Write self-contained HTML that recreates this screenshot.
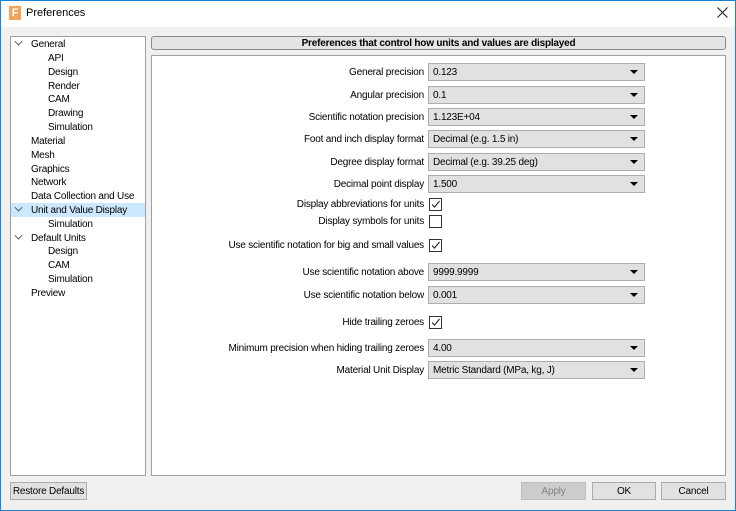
<!DOCTYPE html>
<html><head><style>
*{box-sizing:border-box;margin:0;padding:0}
body{width:736px;height:511px;overflow:hidden;background:#f0f0f0;font-family:"Liberation Sans",Arial,sans-serif;font-size:10px;letter-spacing:-0.2px;color:#000;position:relative}
.win{position:absolute;left:0;top:0;width:736px;height:511px;border:1px solid #1883d7}
.title{position:absolute;left:1px;top:1px;width:734px;height:26px;background:#fff}
.abs{position:absolute}
.tree{left:10px;top:36px;width:136px;height:440px;background:#fff;border:1px solid #a0a0a0}
.ti{position:absolute;height:13px;line-height:14px;white-space:nowrap}
.hdr{left:151px;top:36px;width:575px;height:14px;border:1px solid #8a8a8a;border-radius:3px;background:#e4e4e4;text-align:center;font-weight:bold;line-height:13px}
.pan{left:151px;top:55px;width:575px;height:421px;background:#fff;border:1px solid #a0a0a0}
.lbl{position:absolute;right:312px;white-space:nowrap;text-align:right;line-height:14px}
.dd{position:absolute;left:428px;width:217px;height:18px;background:#e1e1e1;border:1px solid #adadad;line-height:17px;padding-left:4px}
.dd:after{content:"";position:absolute;right:6px;top:6px;border-left:4px solid transparent;border-right:4px solid transparent;border-top:4px solid #000}
.cb{position:absolute;left:429px;width:13px;height:13px;border:1px solid #333;background:#fff}
.btn{position:absolute;top:482px;height:18px;border:1px solid #adadad;background:#e1e1e1;text-align:center;line-height:17px;white-space:nowrap}
.chev{position:absolute;left:15px;width:7px;height:7px;border-right:1.3px solid #444;border-bottom:1.3px solid #444;transform:rotate(45deg) scale(.8)}
</style></head><body>
<div class="win"></div>
<div class="title"></div>
<div class="abs" style="left:9px;top:6px;width:12px;height:14px;background:#f3a35a;color:#fff;font-weight:bold;font-size:11px;line-height:14px;text-align:center">F</div>
<div class="abs" style="left:26px;top:7px;font-size:11px;letter-spacing:0">Preferences</div>
<svg class="abs" style="left:717px;top:7px" width="11" height="11"><path d="M0.5 0.5L10.5 10.5M10.5 0.5L0.5 10.5" stroke="#222" stroke-width="1.1"/></svg>

<div class="abs tree"></div>
<div class="abs" style="left:11px;top:203px;width:134px;height:14px;background:#cce8ff"></div>
<div class="chev" style="top:38px"></div>
<div class="chev" style="top:204px"></div>
<div class="chev" style="top:232px"></div>
<div class="ti" style="left:31px;top:38px">General</div>
<div class="ti" style="left:48px;top:52px">API</div>
<div class="ti" style="left:48px;top:66px">Design</div>
<div class="ti" style="left:48px;top:80px">Render</div>
<div class="ti" style="left:48px;top:93px">CAM</div>
<div class="ti" style="left:48px;top:107px">Drawing</div>
<div class="ti" style="left:48px;top:121px">Simulation</div>
<div class="ti" style="left:31px;top:135px">Material</div>
<div class="ti" style="left:31px;top:149px">Mesh</div>
<div class="ti" style="left:31px;top:163px">Graphics</div>
<div class="ti" style="left:31px;top:176px">Network</div>
<div class="ti" style="left:31px;top:190px">Data Collection and Use</div>
<div class="ti" style="left:31px;top:204px">Unit and Value Display</div>
<div class="ti" style="left:48px;top:218px">Simulation</div>
<div class="ti" style="left:31px;top:232px">Default Units</div>
<div class="ti" style="left:48px;top:245px">Design</div>
<div class="ti" style="left:48px;top:259px">CAM</div>
<div class="ti" style="left:48px;top:273px">Simulation</div>
<div class="ti" style="left:31px;top:287px">Preview</div>

<div class="abs hdr">Preferences that control how units and values are displayed</div>
<div class="abs pan"></div>

<div class="lbl" style="top:66px">General precision</div><div class="dd" style="top:63px">0.123</div>
<div class="lbl" style="top:89px">Angular precision</div><div class="dd" style="top:86px">0.1</div>
<div class="lbl" style="top:111px">Scientific notation precision</div><div class="dd" style="top:108px">1.123E+04</div>
<div class="lbl" style="top:133px">Foot and inch display format</div><div class="dd" style="top:130px">Decimal (e.g. 1.5 in)</div>
<div class="lbl" style="top:156px">Degree display format</div><div class="dd" style="top:153px">Decimal (e.g. 39.25 deg)</div>
<div class="lbl" style="top:178px">Decimal point display</div><div class="dd" style="top:175px">1.500</div>
<div class="lbl" style="top:198px">Display abbreviations for units</div><div class="cb" style="top:198px"><svg width="11" height="11"><path d="M2 5.5 L4.5 8 L9.5 2" fill="none" stroke="#222" stroke-width="1.1"/></svg></div>
<div class="lbl" style="top:215px">Display symbols for units</div><div class="cb" style="top:215px"></div>
<div class="lbl" style="top:239px">Use scientific notation for big and small values</div><div class="cb" style="top:239px"><svg width="11" height="11"><path d="M2 5.5 L4.5 8 L9.5 2" fill="none" stroke="#222" stroke-width="1.1"/></svg></div>
<div class="lbl" style="top:266px">Use scientific notation above</div><div class="dd" style="top:263px">9999.9999</div>
<div class="lbl" style="top:289px">Use scientific notation below</div><div class="dd" style="top:286px">0.001</div>
<div class="lbl" style="top:316px">Hide trailing zeroes</div><div class="cb" style="top:316px"><svg width="11" height="11"><path d="M2 5.5 L4.5 8 L9.5 2" fill="none" stroke="#222" stroke-width="1.1"/></svg></div>
<div class="lbl" style="top:342px">Minimum precision when hiding trailing zeroes</div><div class="dd" style="top:339px">4.00</div>
<div class="lbl" style="top:364px">Material Unit Display</div><div class="dd" style="top:361px">Metric Standard (MPa, kg, J)</div>

<div class="btn" style="left:10px;width:77px">Restore Defaults</div>
<div class="btn" style="left:521px;width:65px;background:#ccc;border-color:#bfbfbf;color:#838383">Apply</div>
<div class="btn" style="left:592px;width:64px">OK</div>
<div class="btn" style="left:661px;width:65px">Cancel</div>
</body></html>
